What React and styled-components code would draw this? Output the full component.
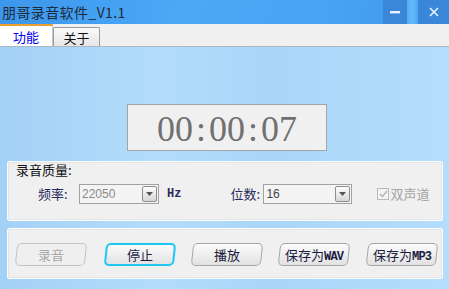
import React from "react";
import styled, { createGlobalStyle, css } from "styled-components";

const Global = createGlobalStyle`
  html, body { margin: 0; padding: 0; overflow: hidden; }
  body { font-family: "Noto Sans CJK SC", "Noto Sans", sans-serif; }
`;

const cjk = `"Noto Sans CJK SC", "Liberation Sans", sans-serif`;

const Window = styled.div`
  width: 449px;
  height: 289px;
  display: flex;
  flex-direction: column;
  overflow: hidden;
`;

const TitleBar = styled.div`
  height: 24px;
  flex: none;
  display: flex;
  align-items: stretch;
  background: linear-gradient(100deg, #3d97ec 0%, #4aa8f6 40%, #48a4f4 70%, #3f98ec 100%);
`;

const Title = styled.div`
  flex: 1;
  padding-left: 2px;
  font-family: ${cjk};
  font-size: 14px;
  line-height: 24px;
  color: #1d2a3a;
  letter-spacing: 0.4px;
`;

const WinButton = styled.div`
  width: ${(p) => p.$w}px;
  display: flex;
  align-items: center;
  justify-content: center;
  background: #3a87da;
  color: #e8f2ff;
`;

const Gap = styled.div`
  width: 11px;
  background: linear-gradient(90deg, #52acf7, #66b8fa, #4ea6f2);
`;

const TabBar = styled.div`
  height: 22px;
  flex: none;
  display: flex;
  align-items: flex-end;
  background: #f0f0f0;
  border-bottom: 1px solid #a9b8c6;
`;

const Tab = styled.div`
  font-family: ${cjk};
  font-size: 13px;
  display: flex;
  align-items: center;
  justify-content: center;
  box-sizing: border-box;
  ${(p) =>
    p.$active
      ? css`
          width: 53px;
          height: 22px;
          background: #ffffff;
          color: #0000f0;
          border-top: 2px solid #f0a030;
          border-right: 1px solid #c8c8c8;
          padding-top: 1px;
        `
      : css`
          width: 47px;
          height: 19px;
          color: #111;
          background: linear-gradient(#fafafa, #e6e6e6);
          border: 1px solid #9a9a9a;
          border-bottom: none;
          border-radius: 2px 2px 0 0;
        `}
`;

const Content = styled.div`
  flex: 1;
  display: flex;
  flex-direction: column;
  padding: 57px 6px 10px 7px;
  background: linear-gradient(90deg, #a3d1f6 0%, #b3dcfa 35%, #a9d6f8 60%, #b5ddfb 100%);
`;

const TimerRow = styled.div`
  display: flex;
  justify-content: flex-start;
  padding-left: 120px;
`;

const Timer = styled.div`
  width: 200px;
  height: 47px;
  box-sizing: border-box;
  background: #f0f0f0;
  border: 1px solid #a4a4a4;
  display: flex;
  align-items: center;
  justify-content: center;
  font-family: "Liberation Serif", "DejaVu Serif", serif;
  font-size: 36px;
  color: #707070;
  padding-top: 2px;
`;

const Colon = styled.span`
  margin: 0 3px;
`;

const Panel = styled.div`
  box-sizing: border-box;
  background: #f0f0f0;
  border: 1px solid #fbfdff;
  box-shadow: inset 0 0 0 1px #e2e6ea;
  border-radius: 2px;
`;

const Group = styled(Panel)`
  margin-top: 10px;
  height: 60px;
  display: flex;
  flex-direction: column;
`;

const Legend = styled.div`
  margin: -1px 0 0 8px;
  font-family: ${cjk};
  font-size: 13px;
  line-height: 17px;
  color: #111;
`;

const FieldRow = styled.div`
  display: flex;
  align-items: center;
  margin-top: 5px;
  height: 21px;
`;

const Label = styled.span`
  font-family: ${cjk};
  font-size: 13px;
  color: #2a2a5c;
  margin-left: ${(p) => p.$ml || 0}px;
  width: ${(p) => p.$w}px;
`;

const Combo = styled.div`
  width: ${(p) => p.$w}px;
  height: 20px;
  box-sizing: border-box;
  border: 1px solid #a2a2a2;
  background: #f4f4f4;
  display: flex;
  align-items: center;
  justify-content: space-between;
  padding: 0 1px 0 2px;
  font-family: "Liberation Sans", Arial, sans-serif;
  font-size: 12px;
  color: ${(p) => (p.$dim ? "#8a8a8a" : "#444")};
`;

const DropBtn = styled.div`
  width: 15px;
  height: 16px;
  box-sizing: border-box;
  border: 1px solid #8e8e8e;
  border-radius: 2px;
  background: linear-gradient(#fdfdfd, #d6d6d6);
  display: flex;
  align-items: center;
  justify-content: center;
`;

const Hz = styled.span`
  margin-left: 8px;
  font-family: "Liberation Mono", monospace;
  font-size: 12px;
  font-weight: bold;
  color: #2a2a5c;
`;

const Check = styled.div`
  margin-left: 25px;
  display: flex;
  align-items: center;
  font-family: ${cjk};
  font-size: 13px;
  color: #a4a4a4;
  gap: 1px;
`;

const CheckBox = styled.div`
  width: 12px;
  height: 12px;
  box-sizing: border-box;
  border: 1px solid #b8b8b8;
  background: #f4f4f4;
  display: flex;
  align-items: center;
  justify-content: center;
`;

const ButtonPanel = styled(Panel)`
  margin-top: 7px;
  height: 51px;
  display: flex;
  align-items: center;
  padding: 1px 0 0 8px;
`;

const Btn = styled.div`
  width: 70px;
  height: 23px;
  margin-right: ${(p) => p.$mr}px;
  box-sizing: border-box;
  border-radius: 5px;
  transform: skewX(-6deg);
  display: flex;
  align-items: center;
  justify-content: center;
  background: linear-gradient(#fbfbfb, #ececec 60%, #e2e2e2);
  border: 1px solid #a6a6a6;
  font-family: ${cjk};
  font-size: 13px;
  color: #1c1c40;
  ${(p) =>
    p.$disabled &&
    css`
      color: #a8a8a8;
      border-color: #c2c2c2;
      background: #efefef;
    `}
  ${(p) =>
    p.$focus &&
    css`
      border: 2px solid #22c6f2;
      box-shadow: 0 0 1px #8fe0f8;
    `}
`;

const BtnText = styled.span`
  transform: skewX(6deg);
  white-space: nowrap;
`;

const Mono = styled.span`
  font-family: "Liberation Mono", monospace;
  font-size: 12px;
  font-weight: bold;
  letter-spacing: -0.8px;
`;

const Arrow = () => (
  <svg width="7" height="4" viewBox="0 0 7 4">
    <path d="M0 0 H7 L3.5 4 Z" fill="#555" />
  </svg>
);

export default function App() {
  return (
    <>
      <Global />
      <Window>
        <TitleBar>
          <Title>朋哥录音软件_V1.1</Title>
          <WinButton $w={24}>
            <svg width="10" height="3" viewBox="0 0 10 3">
              <rect x="0" y="0" width="10" height="2.4" fill="#eaf3ff" />
            </svg>
          </WinButton>
          <Gap />
          <WinButton $w={31}>
            <svg width="10" height="10" viewBox="0 0 10 10">
              <path d="M1 1 L9 9 M9 1 L1 9" stroke="#eaf3ff" strokeWidth="1.6" />
            </svg>
          </WinButton>
        </TitleBar>
        <TabBar>
          <Tab $active>功能</Tab>
          <Tab>关于</Tab>
        </TabBar>
        <Content>
          <TimerRow>
            <Timer>
              00<Colon>:</Colon>00<Colon>:</Colon>07
            </Timer>
          </TimerRow>
          <Group>
            <Legend>录音质量:</Legend>
            <FieldRow>
              <Label $ml={30} $w={41}>频率:</Label>
              <Combo $w={80} $dim>
                <span>22050</span>
                <DropBtn><Arrow /></DropBtn>
              </Combo>
              <Hz>Hz</Hz>
              <Label $ml={49} $w={33}>位数:</Label>
              <Combo $w={89}>
                <span>16</span>
                <DropBtn><Arrow /></DropBtn>
              </Combo>
              <Check>
                <CheckBox>
                  <svg width="9" height="8" viewBox="0 0 9 8">
                    <path d="M1 4 L3.5 6.5 L8 1" stroke="#b0b0b0" strokeWidth="1.4" fill="none" />
                  </svg>
                </CheckBox>
                双声道
              </Check>
            </FieldRow>
          </Group>
          <ButtonPanel>
            <Btn $disabled $mr={19}><BtnText>录音</BtnText></Btn>
            <Btn $focus $mr={17}><BtnText>停止</BtnText></Btn>
            <Btn $mr={17}><BtnText>播放</BtnText></Btn>
            <Btn $mr={18}><BtnText>保存为<Mono>WAV</Mono></BtnText></Btn>
            <Btn $mr={0}><BtnText>保存为<Mono>MP3</Mono></BtnText></Btn>
          </ButtonPanel>
        </Content>
      </Window>
    </>
  );
}
